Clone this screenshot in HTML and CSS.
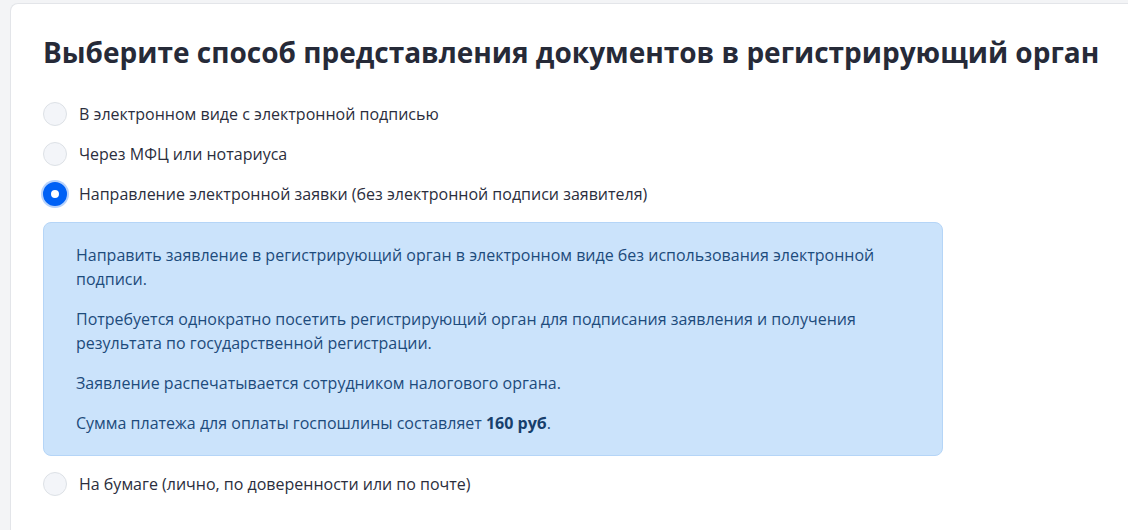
FILE: index.html
```html
<!DOCTYPE html>
<html lang="ru">
  <head>
    <meta charset="UTF-8" />
    <meta name="viewport" content="width=device-width, initial-scale=1.0" />
    <title>Способ представления документов</title>
    <link rel="stylesheet" href="styles.css">
  </head>
  <body>
    <main class="card">
      <h1>Выберите способ представления документов в регистрирующий орган</h1>

      <div class="options">
        <label class="option">
          <input type="radio" name="way" class="radio" />
          <span>В электронном виде с электронной подписью</span>
        </label>
        <label class="option">
          <input type="radio" name="way" class="radio" />
          <span>Через МФЦ или нотариуса</span>
        </label>
        <label class="option">
          <input type="radio" name="way" class="radio" checked />
          <span>Направление электронной заявки (без электронной подписи заявителя)</span>
        </label>

        <div class="info">
          <p>Направить заявление в регистрирующий орган в электронном виде без использования электронной подписи.</p>
          <p>Потребуется однократно посетить регистрирующий орган для подписания заявления и получения результата по государственной регистрации.</p>
          <p>Заявление распечатывается сотрудником налогового органа.</p>
          <p>Сумма платежа для оплаты госпошлины составляет <b>160 руб</b>.</p>
        </div>

        <label class="option">
          <input type="radio" name="way" class="radio" />
          <span>На бумаге (лично, по доверенности или по почте)</span>
        </label>
      </div>
    </main>
  </body>
</html>
```

FILE: styles.css
```css
* {
  margin: 0;
  padding: 0;
  box-sizing: border-box;
}

body {
  background-color: #f3f4f6;
  font-family: "Open Sans", sans-serif;
  color: #2b2e3d;
  padding: 3px 0 0 10px;
}

/* card continues past the right and bottom edge of the window */
.card {
  background-color: #fff;
  border: 1px solid #e3e5e9;
  border-right: none;
  border-bottom: none;
  border-radius: 8px 0 0 0;
  padding: 29px 16px 34px 32px;
}

h1 {
  font-size: 28px;
  font-weight: 700;
  line-height: 38px;
  color: #262a38;
  white-space: nowrap;
}

.options {
  margin-top: 31px;
  display: flex;
  flex-direction: column;
  gap: 16px;
}

.option {
  display: flex;
  align-items: center;
  gap: 12px;
  font-size: 16px;
  line-height: 24px;
  cursor: pointer;
}

.radio {
  appearance: none;
  width: 24px;
  height: 24px;
  border-radius: 50%;
  border: 1px solid #dde1e6;
  background-color: #f3f5f9;
  flex-shrink: 0;
}

.radio:checked {
  border: 8px solid #0061f5;
  background-color: #fff;
  box-shadow: 0 0 0 2px #b7d2fb;
}

.info {
  width: 900px;
  background-color: #cbe3fb;
  border: 1px solid #b5d5f7;
  border-radius: 8px;
  padding: 20px 32px 20px;
  color: #1d4b7c;
  font-size: 16px;
  line-height: 24px;
}

.info p + p {
  margin-top: 16px;
}

.info b {
  font-weight: 700;
  color: #173f6c;
}
```
